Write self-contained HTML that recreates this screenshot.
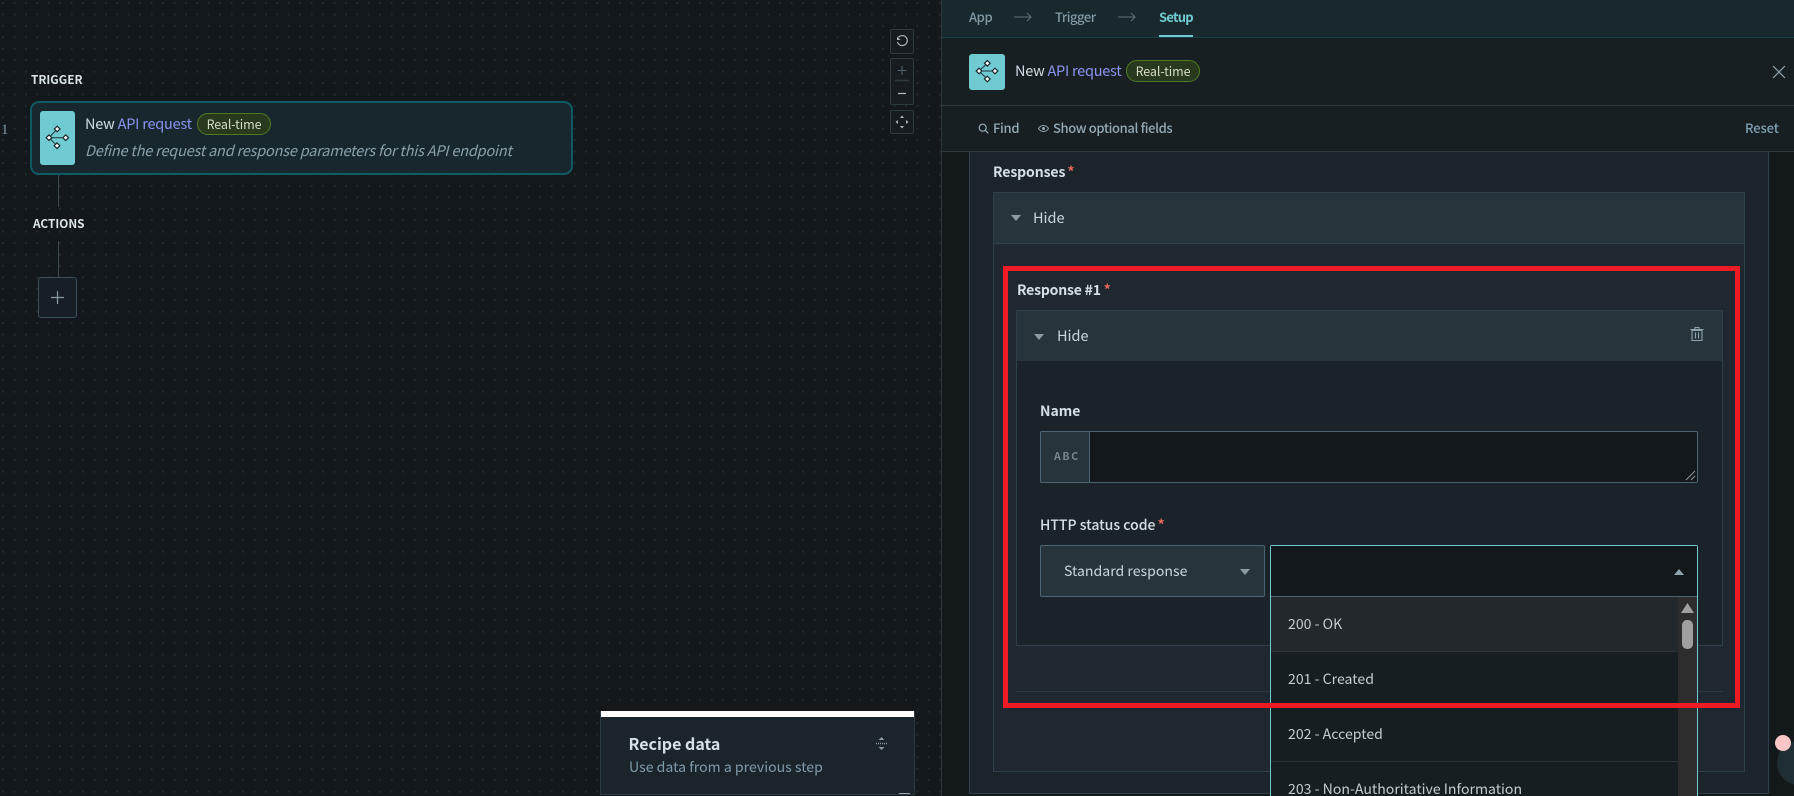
<!DOCTYPE html>
<html lang="en"><head><meta charset="utf-8"><title>Recipe</title>
<style>
html,body{margin:0;padding:0;background:#13181c}
#r{position:relative;width:1794px;height:796px;overflow:hidden;background:#13181c;font-family:"Noto Sans CJK JP","Liberation Sans",sans-serif;color:#c9d6dd}
#r div,#r span.t,#r svg{position:absolute}
.t{white-space:nowrap;line-height:20px;font-size:14px}
.b{font-weight:700}
.m{font-weight:500}
.req{color:#e8685a;font-weight:700}
.api{color:#8b93f0}
.bd{box-sizing:border-box;border:1px solid #2e414a}
.badge{box-sizing:border-box;border:1px solid #4f7a24;background:#28391d;border-radius:12px;color:#d5dcc8;text-align:center;font-size:12.5px;line-height:20px;letter-spacing:-.1px}
</style></head><body>
<div id="r">
<!-- canvas -->
<svg style="left:0;top:0" width="941" height="796"><defs><pattern id="d" width="11.43" height="11.43" patternUnits="userSpaceOnUse" x="2" y="2"><rect width="2" height="2" fill="#212a2f"/></pattern></defs><rect width="941" height="796" fill="url(#d)"/></svg>

<span class="t b" style="left:31px;top:70px;font-size:11.800px;color:#d9e4ea">TRIGGER</span>
<span class="t" style="left:1px;top:120px;font-size:15px;color:#7d97a4;font-family:'Liberation Serif',serif">1</span>
<div style="left:30px;top:101px;width:543px;height:74px;box-sizing:border-box;border:2px solid #0f5a63;border-radius:9px;background:#18272d"></div>
<div style="left:40px;top:111px;width:35px;height:54px;background:#6fcbd1;border-radius:3px"></div>
<svg style="left:40px;top:120px" width="36" height="36" viewBox="0 0 36 36"><path d="M9 17.700 17.200 9M9 17.700 17 25.700M9 17.700H25.700" fill="none" stroke="#21343a" stroke-width="1"/><g fill="#fff" stroke="#1a2a2f" stroke-width="1.200"><rect x="15.200" y="7" width="4" height="4" transform="rotate(45 17.200 9)"/><rect x="7" y="15.700" width="4" height="4" transform="rotate(45 9 17.700)"/><rect x="23.700" y="15.700" width="4" height="4" transform="rotate(45 25.700 17.700)"/><rect x="15" y="23.700" width="4" height="4" transform="rotate(45 17 25.700)"/></g></svg>
<span class="t" style="left:85px;top:114px;font-size:14.500px;letter-spacing:-.22px;color:#d0dce3">New <span class="api">API request</span></span>
<div class="badge" style="left:197px;top:113px;width:74px;height:22px">Real-time</div>
<span class="t" style="left:85px;top:141px;font-size:14.500px;letter-spacing:-.2px;font-style:italic;color:#8ba0ab">Define the request and response parameters for this API endpoint</span>

<div style="left:58px;top:175px;width:1px;height:32px;background:#3a4b54"></div>
<span class="t b" style="left:33px;top:214px;font-size:11.800px;color:#d9e4ea">ACTIONS</span>
<div style="left:58px;top:241px;width:1px;height:36px;background:#3a4b54"></div>
<div style="left:38px;top:277px;width:39px;height:41px;box-sizing:border-box;border:1px solid #3a505b;border-radius:3px;background:#171f24"></div>
<svg style="left:50px;top:290px" width="15" height="15"><path d="M7.500 1V14M1 7.500H14" stroke="#8a9aa3" stroke-width="1.200"/></svg>

<!-- zoom ctrls -->
<div style="left:890px;top:29px;width:24px;height:25px;box-sizing:border-box;border:1px solid #2c3a42;border-radius:2px;background:#161c20"></div>
<svg style="left:895px;top:34px" width="14" height="14" viewBox="0 0 14 14"><path d="M3.400 3.400A5 5 0 1 1 2.500 8" fill="none" stroke="#aab6bd" stroke-width="1.200"/><path d="M2 2.500V6H5.500z" fill="#aab6bd"/></svg>
<div style="left:890px;top:58px;width:24px;height:47px;box-sizing:border-box;border:1px solid #2c3a42;border-radius:2px;background:#161c20"></div>
<svg style="left:895px;top:64px" width="14" height="36"><path d="M7 2V11M2.500 6.500H11.500" stroke="#4f5e67" stroke-width="1.100"/><path d="M0 16.500H14" stroke="#2e3b43" stroke-width="1.500"/><path d="M3 29.500H11" stroke="#aab6bd" stroke-width="1.300"/></svg>
<div style="left:890px;top:110px;width:24px;height:24px;box-sizing:border-box;border:1px solid #2c3a42;border-radius:2px;background:#161c20"></div>
<svg style="left:895px;top:115px" width="14" height="14"><path d="M7 .5 9 3H5zM7 13.500 9 11H5zM.5 7 3 5V9zM13.500 7 11 5V9z" fill="#aab6bd"/></svg>

<!-- panel -->
<div style="left:941px;top:0;width:853px;height:796px;background:#13181b;border-left:1px solid #2a363c"></div>
<div style="left:942px;top:0;width:852px;height:37px;background:#18282d;border-bottom:1px solid #17414a"></div>
<span class="t m" style="left:969px;top:7px;font-size:13px;letter-spacing:-.4px;color:#8299a5">App</span>
<svg style="left:1014px;top:12px" width="18" height="10"><path d="M0 5H17M13 1l4 4-4 4" fill="none" stroke="#5f7078" stroke-width="1"/></svg>
<span class="t m" style="left:1055px;top:7px;font-size:13px;letter-spacing:-.45px;color:#8299a5">Trigger</span>
<svg style="left:1118px;top:12px" width="18" height="10"><path d="M0 5H17M13 1l4 4-4 4" fill="none" stroke="#5f7078" stroke-width="1"/></svg>
<span class="t b" style="left:1159px;top:7px;font-size:13px;letter-spacing:-.75px;color:#6fcbd1">Setup</span>
<div style="left:1159px;top:35px;width:34px;height:2px;background:#6fcbd1"></div>

<div style="left:942px;top:38px;width:852px;height:67px;background:#181f23;border-bottom:1px solid #2d393e"></div>
<div style="left:969px;top:54px;width:36px;height:36px;background:#6fcbd1;border-radius:3px"></div>
<svg style="left:969px;top:53px" width="36" height="36" viewBox="0 0 36 36"><path d="M10 18 18.300 10.300M10 18 18.300 26M10 18H26" fill="none" stroke="#21343a" stroke-width="1"/><g fill="#fff" stroke="#1a2a2f" stroke-width="1.200"><rect x="16.300" y="8.300" width="4" height="4" transform="rotate(45 18.300 10.300)"/><rect x="8" y="16" width="4" height="4" transform="rotate(45 10 18)"/><rect x="24" y="16" width="4" height="4" transform="rotate(45 26 18)"/><rect x="16.300" y="24" width="4" height="4" transform="rotate(45 18.300 26)"/></g></svg>
<span class="t" style="left:1015px;top:61px;font-size:14.500px;letter-spacing:-.25px;color:#d0dce3">New <span class="api">API request</span></span>
<div class="badge" style="left:1126px;top:60px;width:74px;height:22px">Real-time</div>
<svg style="left:1772px;top:65px" width="14" height="14"><path d="M1 1 13 13M13 1 1 13" stroke="#8fa4af" stroke-width="1.200"/></svg>

<div style="left:942px;top:106px;width:852px;height:45px;background:#181f23;border-bottom:1px solid #2d393e"></div>
<svg style="left:978px;top:123px" width="11" height="11"><circle cx="4.700" cy="4.700" r="3.500" fill="none" stroke="#93a9b5" stroke-width="1.200"/><path d="M7.300 7.300 10.300 10.300" stroke="#93a9b5" stroke-width="1.300"/></svg>
<span class="t m" style="left:993px;top:118px;font-size:13px;letter-spacing:-.3px;color:#93a9b5">Find</span>
<svg style="left:1038px;top:124px" width="11" height="9"><path d="M.5 4.500C3 .5 8 .5 10.500 4.500 8 8.500 3 8.500.5 4.500z" fill="none" stroke="#93a9b5" stroke-width="1"/><circle cx="5.500" cy="4.500" r="1.500" fill="#93a9b5"/></svg>
<span class="t m" style="left:1053px;top:118px;font-size:13px;letter-spacing:-.37px;color:#93a9b5">Show optional fields</span>
<span class="t m" style="left:1745px;top:118px;font-size:13px;letter-spacing:-.1px;color:#7e9fb1">Reset</span>

<!-- content -->
<div class="bd" style="left:969px;top:152px;width:800px;height:642px;background:#1c242b;border-top:0"></div>
<span class="t b" style="left:993px;top:162px;font-size:14px;letter-spacing:-.1px;color:#d5e0e6">Responses <span class="req" style="margin-left:-1px">*</span></span>
<div class="bd" style="left:993px;top:192px;width:752px;height:580px;background:#1f2830"></div>
<div class="bd" style="left:993px;top:192px;width:752px;height:52px;background:#27343b"></div>
<svg style="left:1011px;top:215px" width="10" height="6"><path d="M0 0H10L5 6z" fill="#8c9aa2"/></svg>
<span class="t" style="left:1033px;top:208px;font-size:14.500px;color:#c9d6dd">Hide</span>

<span class="t b" style="left:1017px;top:280px;font-size:14px;letter-spacing:-.2px;color:#d5e0e6">Response #1 <span class="req">*</span></span>
<div class="bd" style="left:1016px;top:310px;width:707px;height:336px;background:#1b232a"></div>
<div class="bd" style="left:1016px;top:310px;width:707px;height:51px;background:#27343b;border-bottom:0"></div>
<svg style="left:1034px;top:334px" width="10" height="6"><path d="M0 0H10L5 6z" fill="#8c9aa2"/></svg>
<span class="t" style="left:1057px;top:326px;font-size:14.500px;color:#c9d6dd">Hide</span>
<svg style="left:1690px;top:326px" width="14" height="16" viewBox="0 0 14 16"><path d="M2 4.500V14.500H12V4.500zM.5 3.500H13.500M5 3.500V1.500H9V3.500M5.500 6.500V12.500M8.500 6.500V12.500" fill="none" stroke="#8fa4af" stroke-width="1.100"/></svg>
<span class="t b" style="left:1040px;top:401px;font-size:14px;color:#d5e0e6">Name</span>
<div style="left:1040px;top:431px;width:658px;height:52px;box-sizing:border-box;border:1px solid #4a6472;border-radius:2px;background:#13181c"></div>
<div style="left:1040px;top:431px;width:50px;height:52px;box-sizing:border-box;border:1px solid #4a6472;border-radius:2px 0 0 2px;background:#27343b"></div>
<span class="t b" style="left:1054px;top:447px;font-size:10.500px;letter-spacing:1.700px;color:#77858d">ABC</span>
<svg style="left:1685px;top:470px" width="11" height="11"><path d="M1 10 10 1M6 10 10 6" stroke="#8a9499" stroke-width="1"/></svg>

<span class="t m" style="left:1040px;top:515px;font-size:14px;color:#d5e0e6">HTTP status code <span class="req" style="margin-left:-1px">*</span></span>
<div style="left:1040px;top:545px;width:225px;height:52px;box-sizing:border-box;border:1px solid #4a6472;border-radius:2px;background:#27343b"></div>
<span class="t" style="left:1064px;top:561px;font-size:14.100px;color:#c9d6dd">Standard response</span>
<svg style="left:1240px;top:569px" width="10" height="6"><path d="M0 0H10L5 6z" fill="#8c9aa2"/></svg>
<div style="left:1016px;top:691px;width:707px;height:1px;background:#2b3840"></div>

<!-- select -->
<div style="left:1270px;top:545px;width:428px;height:251px;box-sizing:border-box;border:1px solid #72c9cf;border-bottom:0;border-radius:2px 2px 0 0;background:#171e21"></div>
<div style="left:1271px;top:546px;width:426px;height:50px;background:#13181c"></div>
<div style="left:1271px;top:596px;width:426px;height:1px;background:#4a6472"></div>
<svg style="left:1674px;top:569px" width="10" height="6"><path d="M0 6H10L5 0z" fill="#8fa4af"/></svg>
<div style="left:1271px;top:597px;width:407px;height:54px;background:#22282b"></div>
<div style="left:1271px;top:651px;width:407px;height:1px;background:#2a3338"></div>
<div style="left:1271px;top:761px;width:407px;height:1px;background:#2a3338"></div>
<span class="t" style="left:1288px;top:614px;font-size:14.100px;color:#c4ccd0">200 - OK</span>
<span class="t" style="left:1288px;top:669px;font-size:14.100px;color:#c4ccd0">201 - Created</span>
<span class="t" style="left:1288px;top:724px;font-size:14.100px;color:#c4ccd0">202 - Accepted</span>
<span class="t" style="left:1288px;top:779px;font-size:14.100px;color:#c4ccd0">203 - Non-Authoritative Information</span>
<div style="left:1678px;top:597px;width:19px;height:199px;background:#2e2d2d"></div>
<svg style="left:1681px;top:603px" width="13" height="10"><path d="M0 10H13L6.500 0z" fill="#a0a0a0"/></svg>
<div style="left:1682px;top:620px;width:11px;height:29px;background:#a0a0a0;border-radius:5px"></div>

<!-- red box -->
<div style="left:1003px;top:266px;width:737px;height:442px;box-sizing:border-box;border:5px solid #ed1c24"></div>

<!-- circles -->
<div style="left:1777px;top:741px;width:44px;height:44px;border-radius:50%;background:#1f2e35"></div>
<div style="left:1775px;top:735px;width:16px;height:16px;border-radius:50%;background:#f8c6c6"></div>

<!-- recipe data -->
<div style="left:600px;top:711px;width:315px;height:84px;box-sizing:border-box;border:1px solid #2b3c44;background:#1c242b"></div>
<div style="left:601px;top:711px;width:313px;height:6px;background:#fff"></div>
<span class="t b" style="left:628.500px;top:733px;font-size:16px;color:#d5e0e6">Recipe data</span>
<span class="t" style="left:629px;top:757px;font-size:14.100px;color:#7f9bab">Use data from a previous step</span>
<svg style="left:875px;top:736px" width="13" height="15"><path d="M6.500 1 9.500 4H3.500zM6.500 14 9.500 11H3.500z" fill="#8a9aa3"/><path d="M1 7.500H12" stroke="#8a9aa3" stroke-width="1.500" stroke-dasharray="1 1"/></svg>
<div style="left:899px;top:793px;width:11px;height:1px;background:#9aa6ac"></div>
</div>
</body></html>
